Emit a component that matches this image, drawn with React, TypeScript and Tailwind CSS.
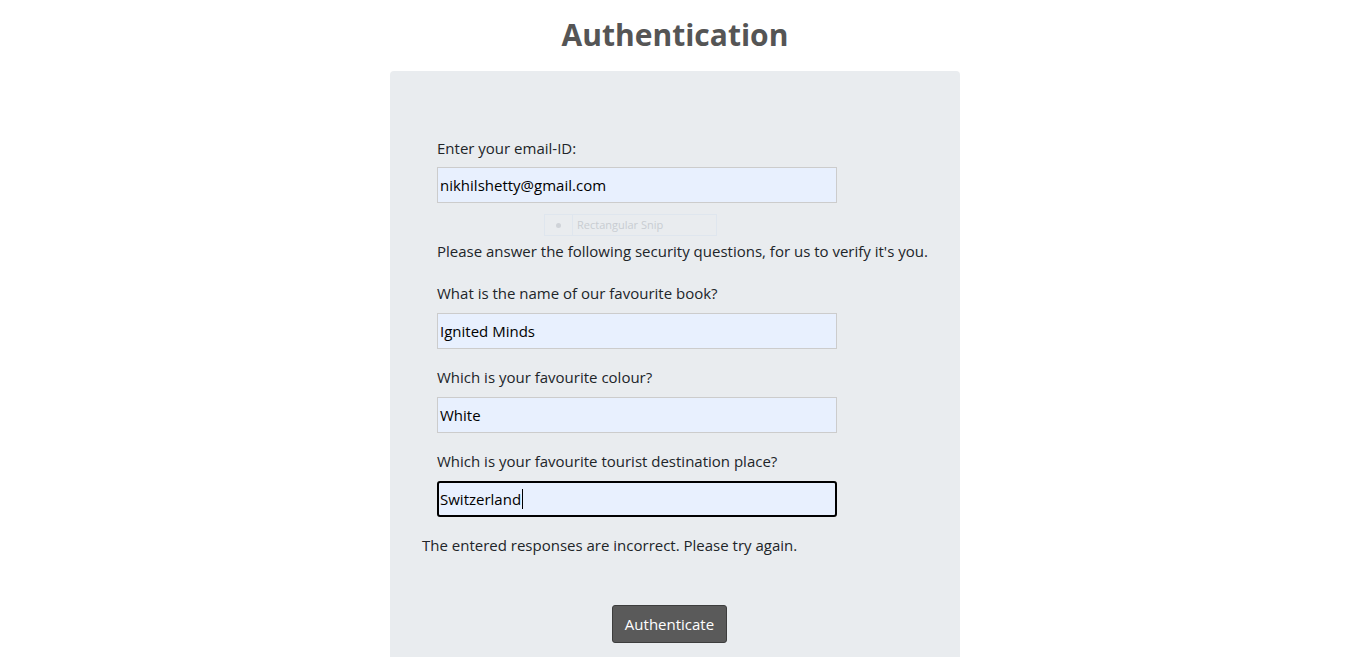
import React from "react";

const questions = [
  { label: "What is the name of our favourite book?", value: "Ignited Minds" },
  { label: "Which is your favourite colour?", value: "White" },
  { label: "Which is your favourite tourist destination place?", value: "Switzerland", focused: true },
];

export default function App() {
  return (
    <div className="min-h-screen bg-white text-[#212529] font-['Open_Sans','Noto_Sans',sans-serif]">
      <h1 className="pt-[15px] pl-[3px] text-center text-[30px] leading-[40px] font-bold text-[#555555]">
        Authentication
      </h1>
      <div className="flex justify-center pl-[3px]">
        <div className="relative mt-[16px] w-[570px] rounded-t-[4px] bg-[#e9ecef] pt-[66px] pb-[14px]">
          {/* faint snipping-tool overlay captured in the screenshot */}
          <div className="absolute left-[154px] top-[143px] flex h-[22px] w-[173px] items-center border border-[#dfe6ee] text-[11px] text-[#c8ccd2]">
            <span className="flex h-full w-[28px] items-center justify-center border-r border-[#dfe6ee]">
              <span className="h-[5px] w-[5px] rounded-full bg-[#cfd3d8]" />
            </span>
            <span className="pl-[4px]">Rectangular Snip</span>
          </div>

          <div className="px-[47px] whitespace-nowrap">
            <label className="block text-[15px] leading-[22px]">Enter your email-ID:</label>
            <input
              readOnly
              value="nikhilshetty@gmail.com"
              className="mt-[8px] block h-[36px] w-[400px] border border-[#cccccc] bg-[#e8f0fe] px-[2px] text-[15px] text-black outline-none"
            />
            <p className="mt-[37px] text-[15px] leading-[22px]">
              Please answer the following security questions, for us to verify it's you.
            </p>
            <div className="mt-[20px] flex flex-col">
              {questions.map((q, i) => (
                <div key={i} className={i > 0 ? "mt-[17px]" : ""}>
                  <label className="block text-[15px] leading-[22px]">{q.label}</label>
                  <div
                    className={
                      q.focused
                        ? "mt-[9px] flex h-[36px] w-[400px] items-center rounded-[3px] border-2 border-black bg-[#e8f0fe] px-[1px] text-[15px] text-black"
                        : "mt-[9px] flex h-[36px] w-[400px] items-center border border-[#cccccc] bg-[#e8f0fe] px-[2px] text-[15px] text-black"
                    }
                  >
                    {q.value}
                    {q.focused && <span className="ml-[1px] h-[20px] w-px bg-black" />}
                  </div>
                </div>
              ))}
            </div>
          </div>

          <p className="mt-[17px] pl-[32px] text-[15px] leading-[22px] whitespace-nowrap">
            The entered responses are incorrect. Please try again.
          </p>

          <div className="mt-[49px] flex justify-center pr-[11px]">
            <button className="h-[38px] w-[115px] rounded-[3px] border border-[#3d3d3d] bg-[#5a5a5a] text-[15px] text-white">
              Authenticate
            </button>
          </div>
        </div>
      </div>
    </div>
  );
}
